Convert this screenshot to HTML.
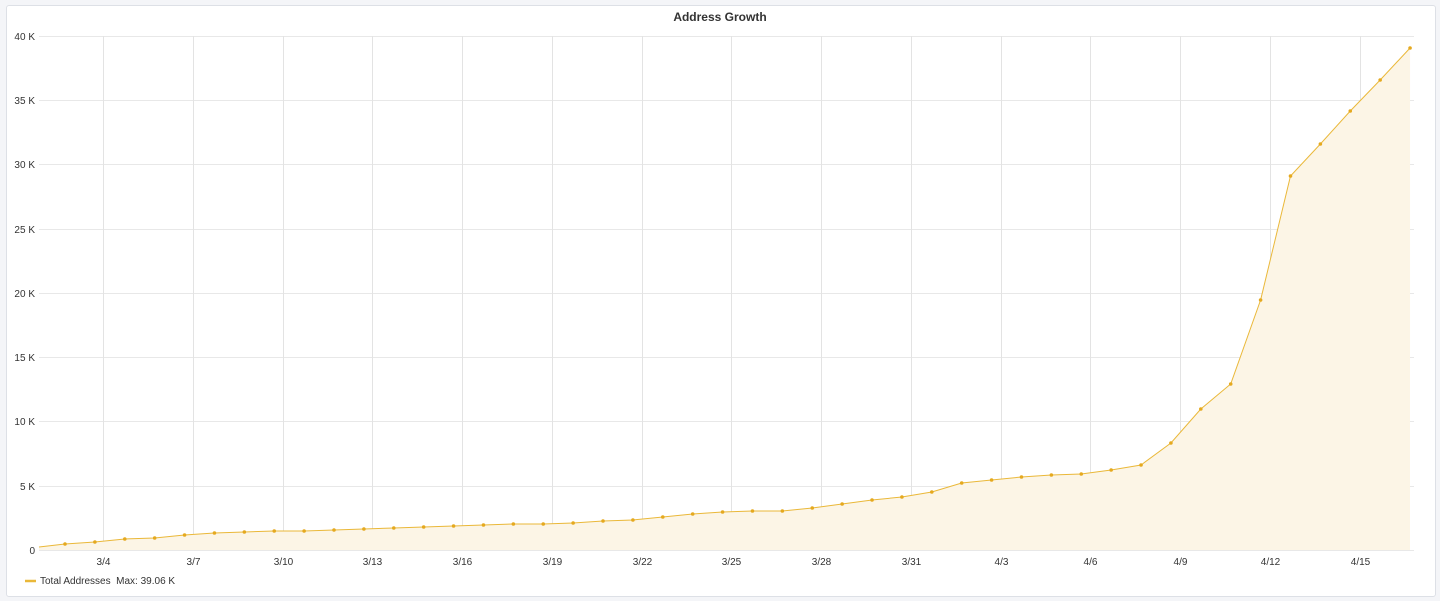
<!DOCTYPE html><html><head><style>
body{margin:0;background:#f4f5f8;width:1440px;height:601px;overflow:hidden;font-family:"Liberation Sans",sans-serif}
.p{position:absolute;left:6px;top:5px;width:1428px;height:590px;background:#fff;border:1px solid #dde0e6;border-radius:3px}
</style></head><body><div class="p"></div>
<svg width="1440" height="601" style="position:absolute;left:0;top:0">
<text x="720" y="21" text-anchor="middle" font-size="12" font-weight="bold" fill="#333">Address Growth</text>
<g stroke="#e8e8e8" stroke-width="1">
<line x1="39" x2="1414" y1="36.5" y2="36.5"/><line x1="39" x2="1414" y1="100.5" y2="100.5"/><line x1="39" x2="1414" y1="164.5" y2="164.5"/><line x1="39" x2="1414" y1="229.5" y2="229.5"/><line x1="39" x2="1414" y1="293.5" y2="293.5"/><line x1="39" x2="1414" y1="357.5" y2="357.5"/><line x1="39" x2="1414" y1="421.5" y2="421.5"/><line x1="39" x2="1414" y1="486.5" y2="486.5"/><line x1="39" x2="1414" y1="550.5" y2="550.5"/>
</g>
<g stroke="#e3e3e3" id="v"></g>
<g font-size="10" fill="#333" text-anchor="end">
<text x="35" y="40">40 K</text><text x="35" y="104">35 K</text><text x="35" y="168">30 K</text><text x="35" y="233">25 K</text><text x="35" y="297">20 K</text><text x="35" y="361">15 K</text><text x="35" y="425">10 K</text><text x="35" y="490">5 K</text><text x="35" y="554">0</text>
</g>
<g id="xl" font-size="10" fill="#333" text-anchor="middle"></g>
<path id="area" fill="#fcf5e6"/>
<polyline id="ln" fill="none" stroke="#eab839" stroke-width="1"/>
<g id="dots" fill="#e5a91f"></g>
<line x1="25" x2="36" y1="581" y2="581" stroke="#eab839" stroke-width="2.5"/>
<text x="40" y="584" font-size="10" fill="#333">Total Addresses&#160; Max: 39.06 K</text>
</svg>
<script>
var ys=[547,544,542,539,538,535,533,532,531,531,530,529,528,527,526,525,524,524,523,521,520,517,514,512,511,511,508,504,500,497,492,483,480,477,475,474,470,465,443,409,384,300,176,144,111,80,48];
var pts=[],d='';
ys.forEach(function(y,i){var x=i==0?39:65+(i-1)*29.89;pts.push(x+','+y);if(i>0)d+='<circle cx="'+x+'" cy="'+y+'" r="1.8"/>';});
document.getElementById('ln').setAttribute('points',pts.join(' '));
document.getElementById('area').setAttribute('d','M39,550 L'+pts.join(' L')+' L1410,550 Z');
document.getElementById('dots').innerHTML=d;
var lab=['3/4','3/7','3/10','3/13','3/16','3/19','3/22','3/25','3/28','3/31','4/3','4/6','4/9','4/12','4/15'],v='',t='';
lab.forEach(function(l,i){var x=Math.round(103+i*89.77)+0.5;v+='<line x1="'+x+'" x2="'+x+'" y1="36" y2="550"/>';t+='<text x="'+x+'" y="565">'+l+'</text>';});
document.getElementById('v').innerHTML=v;document.getElementById('xl').innerHTML=t;
</script></body></html>
